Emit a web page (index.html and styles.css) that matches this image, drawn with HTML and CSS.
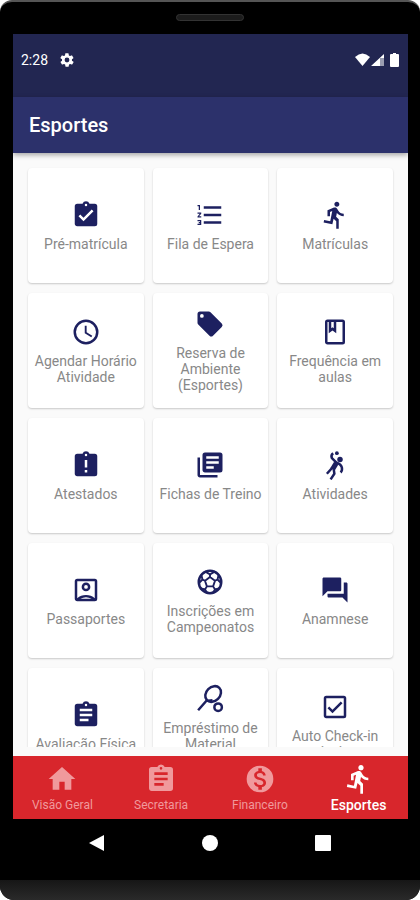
FILE: index.html
```
<!DOCTYPE html>
<html lang="pt-BR">
<head>
<meta charset="utf-8">
<meta name="viewport" content="width=device-width, initial-scale=1">
<title>Esportes</title>
<link rel="stylesheet" href="styles.css">
</head>
<body>
<div class="phone">
<div class="phone-top"><div class="speaker"></div></div>

<div class="screen">
<div class="status-bar">
<span class="time">2:28</span>
<svg class="gear" viewBox="0 0 24 24"><path d="M19.4 13a7 7 0 0 0 0-2l2.1-1.6c.2-.2.2-.4.1-.6l-2-3.500c-.1-.2-.4-.3-.6-.2l-2.500 1a7 7 0 0 0-1.700-1l-.4-2.600a.5.5 0 0 0-.5-.5h-4c-.2 0-.4.200-.5.5l-.4 2.600a7 7 0 0 0-1.700 1l-2.500-1c-.2-.1-.5 0-.6.200l-2 3.500c-.1.200-.1.500.1.600L4.600 11a7 7 0 0 0 0 2l-2.100 1.600c-.2.200-.2.400-.1.600l2 3.500c.1.200.4.300.6.200l2.500-1a7 7 0 0 0 1.700 1l.4 2.600c0 .3.300.5.500.5h4c.3 0 .5-.2.500-.5l.4-2.600a7 7 0 0 0 1.700-1l2.500 1c.2.100.5 0 .6-.2l2-3.500c.1-.2.100-.5-.1-.6zM12 15.600a3.600 3.600 0 1 1 0-7.200 3.600 3.600 0 0 1 0 7.200z"/></svg>
<svg class="signals" viewBox="0 0 45 14"><path d="M0 4Q7.500-3 15 4L7.500 13z"/><path d="M16 13L29 1v4h-4v8z"/><path d="M25 5h4v8h-4z" opacity=".55"/><path d="M38 0h3v1h2q1 0 1 1v11q0 1-1 1h-7q-1 0-1-1V2q0-1 1-1h2z"/></svg>
</div>

<header class="app-bar"><h1>Esportes</h1></header>

<main class="content">
<div class="grid">
<button class="card"><svg viewBox="0 0 24 24"><path d="M19 3h-4.200a3 3 0 0 0-5.600 0H5a2 2 0 0 0-2 2v14c0 1.100.9 2 2 2h14a2 2 0 0 0 2-2V5a2 2 0 0 0-2-2zm-7 0a1 1 0 1 1 0 2 1 1 0 0 1 0-2zm-2 14l-4-4 1.400-1.400 2.600 2.600 6.600-6.600L18 9z"/></svg><span>Pré-matrícula</span></button>
<button class="card"><svg viewBox="0 0 24 24"><path d="M2 17h2v.5H3v1h1v.5H2v1h3v-4H2zm1-9h1V4H2v1h1zm-1 3h1.800L2 13.100v.9h3v-1H3.200L5 10.900V10H2zm5-6v2h14V5zm0 14h14v-2H7zm0-6h14v-2H7z"/></svg><span>Fila de Espera</span></button>
<button class="card"><svg viewBox="0 0 24 24"><path d="M13.490 5.480c1.100 0 2-.9 2-2s-.9-2-2-2-2 .9-2 2 .9 2 2 2zm-3.600 13.900l1-4.400 2.100 2v6h2v-7.500l-2.100-2 .6-3c1.300 1.500 3.300 2.500 5.500 2.500v-2c-1.900 0-3.500-1-4.300-2.400l-1-1.600c-.4-.6-1-1-1.700-1-.3 0-.5.100-.8.100l-5.200 2.200v4.700h2v-3.400l1.800-.7-1.600 8.100-4.900-1-.4 2z"/></svg><span>Matrículas</span></button>

<button class="card"><svg viewBox="0 0 24 24"><path d="M12 2a10 10 0 1 0 0 20 10 10 0 0 0 0-20zm0 18a8 8 0 1 1 0-16 8 8 0 0 1 0 16zm.5-13H11v6l5.200 3.200.8-1.300-4.500-2.700z"/></svg><span>Agendar Horário Atividade</span></button>
<button class="card"><svg viewBox="0 0 24 24"><path d="M21.400 11.600l-9-9A2 2 0 0 0 11 2H4a2 2 0 0 0-2 2v7c0 .6.200 1 .6 1.400l9 9a2 2 0 0 0 2.800 0l7-7a2 2 0 0 0 0-2.800zM5.500 7a1.500 1.500 0 1 1 0-3 1.500 1.500 0 0 1 0 3z"/></svg><span>Reserva de Ambiente (Esportes)</span></button>
<button class="card"><svg viewBox="0 0 24 24"><path d="M18 2H6a2 2 0 0 0-2 2v16c0 1.100.9 2 2 2h12a2 2 0 0 0 2-2V4a2 2 0 0 0-2-2zM9 4h2v5l-1-.8L9 9zm9 16H6V4h1v9l3-2.300 3 2.300V4h5z"/></svg><span>Frequência em aulas</span></button>

<button class="card"><svg viewBox="0 0 24 24"><path d="M19 3h-4.200a3 3 0 0 0-5.600 0H5a2 2 0 0 0-2 2v14c0 1.100.9 2 2 2h14a2 2 0 0 0 2-2V5a2 2 0 0 0-2-2zm-6 15h-2v-2h2zm0-4h-2V8h2zm-1-9a1 1 0 1 1 0-2 1 1 0 0 1 0 2z"/></svg><span>Atestados</span></button>
<button class="card"><svg viewBox="0 0 24 24"><path d="M4 6H2v14c0 1.100.9 2 2 2h14v-2H4zm16-4H8a2 2 0 0 0-2 2v12c0 1.100.9 2 2 2h12a2 2 0 0 0 2-2V4a2 2 0 0 0-2-2zm-1 9H9V9h10zm-4 4H9v-2h6zm4-8H9V5h10z"/></svg><span>Fichas de Treino</span></button>
<button class="card"><svg viewBox="0 0 24 24"><circle cx="16" cy="7.500" r="2.200"/><circle cx="13.500" cy="2.500" r="1.500"/><path d="M10.500 2.500Q8.500 4 9.500 6.500L13 10q4 1.500 4.500 4t-1 4" class="line"/><path d="M13 10.500l-3 5" class="thick"/><path d="M10 14l-4.500 5M11 15.500l.5 3.500-3 4.500" class="line"/></svg><span>Atividades</span></button>

<button class="card"><svg viewBox="0 0 24 24"><path d="M19 3H5a2 2 0 0 0-2 2v14c0 1.100.9 2 2 2h14a2 2 0 0 0 2-2V5a2 2 0 0 0-2-2zm0 15.600c-1.800-1.700-4.300-2.600-7-2.600s-5.200.9-7 2.600V5h14zM12 13a3.500 3.500 0 1 0 0-7 3.500 3.500 0 0 0 0 7zm0-5a1.500 1.500 0 1 1 0 3 1.500 1.500 0 0 1 0-3zM7.500 19a9 9 0 0 1 9 0z"/></svg><span>Passaportes</span></button>
<button class="card"><svg viewBox="0 0 24 24"><circle cx="12" cy="12" r="9" class="line"/><path d="M12 8l4 3-1.500 4.500h-5L8 11zM12 8V6l4-2.500M12 6L8 3.500M16 11l2-1 1-4M18 10l3 3M14.500 15.500L16 18l4-1M16 18l-2 3M9.500 15.500L8 18l-4-1M8 18l2 3M8 11l-2-1-1-4M6 10l-3 3" class="thin"/></svg><span>Inscrições em Campeonatos</span></button>
<button class="card"><svg viewBox="0 0 24 24"><path d="M21 6h-2v9H6v2c0 .6.500 1 1 1h11l4 4V7c0-.5-.4-1-1-1zm-4 6V3c0-.5-.4-1-1-1H3c-.5 0-1 .5-1 1v14l4-4h10c.6 0 1-.4 1-1z"/></svg><span>Anamnese</span></button>

<button class="card"><svg viewBox="0 0 24 24"><path d="M19 3h-4.200a3 3 0 0 0-5.600 0H5a2 2 0 0 0-2 2v14c0 1.100.9 2 2 2h14a2 2 0 0 0 2-2V5a2 2 0 0 0-2-2zm-7 0a1 1 0 1 1 0 2 1 1 0 0 1 0-2zm2 14H7v-2h7zm3-4H7v-2h10zm0-4H7V7h10z"/></svg><span>Avaliação Física</span></button>
<button class="card"><svg viewBox="0 0 24 24"><ellipse cx="14.500" cy="8" rx="7" ry="5.500" transform="rotate(-45 14.500 8)" class="line"/><path d="M9.500 13L2.500 21M9 13.500l5-.5" class="line"/><circle cx="18.500" cy="18.500" r="3" class="line"/></svg><span>Empréstimo de Material (Esportes)</span></button>
<button class="card"><svg viewBox="0 0 24 24"><path d="M19 3H5a2 2 0 0 0-2 2v14c0 1.100.9 2 2 2h14a2 2 0 0 0 2-2V5a2 2 0 0 0-2-2zm0 16H5V5h14zM18 9l-1.400-1.400L10 14.200l-2.600-2.600L6 13l4 4z"/></svg><span>Auto Check-in piscina</span></button>
</div>
</main>

<nav class="tabs">
<a href="#" class="tab"><svg viewBox="0 0 24 24"><path d="M10 20v-6h4v6h5v-8h3L12 3 2 12h3v8z"/></svg><span>Visão Geral</span></a>
<a href="#" class="tab"><svg viewBox="0 0 24 24"><path d="M19 3h-4.200a3 3 0 0 0-5.600 0H5a2 2 0 0 0-2 2v14c0 1.100.9 2 2 2h14a2 2 0 0 0 2-2V5a2 2 0 0 0-2-2zm-7 0a1 1 0 1 1 0 2 1 1 0 0 1 0-2zm2 14H7v-2h7zm3-4H7v-2h10zm0-4H7V7h10z"/></svg><span>Secretaria</span></a>
<a href="#" class="tab"><svg viewBox="0 0 24 24"><path d="M12 2a10 10 0 1 0 0 20 10 10 0 0 0 0-20zm1.410 16.090V20h-2.670v-1.930c-1.710-.36-3.160-1.460-3.270-3.400h1.960c.1 1.050.82 1.870 2.650 1.870 1.960 0 2.400-.98 2.400-1.590 0-.83-.44-1.610-2.670-2.140-2.480-.6-4.180-1.620-4.180-3.670 0-1.720 1.390-2.840 3.110-3.210V4h2.670v1.950c1.860.45 2.790 1.860 2.850 3.390H14.300c-.05-1.110-.64-1.870-2.220-1.870-1.500 0-2.400.68-2.400 1.640 0 .84.65 1.390 2.670 1.910s4.180 1.390 4.180 3.910c-.01 1.830-1.380 2.830-3.120 3.160z"/></svg><span>Financeiro</span></a>
<a href="#" class="tab active"><svg viewBox="0 0 24 24"><path d="M13.490 5.480c1.100 0 2-.9 2-2s-.9-2-2-2-2 .9-2 2 .9 2 2 2zm-3.600 13.900l1-4.400 2.100 2v6h2v-7.500l-2.100-2 .6-3c1.300 1.500 3.300 2.500 5.500 2.500v-2c-1.900 0-3.500-1-4.300-2.400l-1-1.600c-.4-.6-1-1-1.700-1-.3 0-.5.100-.8.100l-5.200 2.200v4.700h2v-3.400l1.800-.7-1.600 8.100-4.900-1-.4 2z"/></svg><span>Esportes</span></a>
</nav>
</div>

<div class="system-nav">
<button aria-label="Voltar"><svg viewBox="0 0 18 18"><path d="M1 9L16 1v16z"/></svg></button>
<button aria-label="Início"><svg viewBox="0 0 18 18"><circle cx="9" cy="9" r="8"/></svg></button>
<button aria-label="Recentes"><svg viewBox="0 0 18 18"><rect x="1" y="1" width="16" height="16" rx="1"/></svg></button>
</div>
<div class="phone-bottom"></div>
</div>
</body>
</html>
```

FILE: styles.css
```
*{
box-sizing:border-box;
}
body{
margin:0;
background:#fff;
font-family:Roboto,"Liberation Sans",sans-serif;
}
h1{
margin:0;
font-size:20px;
line-height:24px;
font-weight:500;
}
button{
font-family:inherit;
border:none;
padding:0;
cursor:pointer;
}
svg{
display:block;
fill:currentColor;
}
.phone{
display:flex;
flex-direction:column;
height:100vh;
background:#000;
border-top:2px solid #555;
border-radius:12px 12px 14px 14px;
overflow:hidden;
}
.phone-top{
flex:none;
height:32px;
padding-top:12px;
}
.speaker{
width:68px;
height:7px;
margin:0 auto;
border:1px solid #333;
border-radius:4px;
background:#1c1c1c;
}
.screen{
flex:1;
min-height:0;
display:flex;
flex-direction:column;
margin:0 12px 0 13px;
background:#fafafa;
}

/* top bars */
.status-bar{
flex:none;
display:flex;
align-items:center;
height:63px;
padding:0 8px 12px;
background:#222651;
color:#fff;
}
.time{
font-size:14px;
line-height:16px;
}
.gear{
width:16px;
height:16px;
margin-left:11px;
}
.signals{
width:45px;
height:14px;
margin-left:auto;
}
.app-bar{
flex:none;
display:flex;
align-items:center;
height:56px;
padding:0 16px;
background:#2c316b;
color:#fff;
box-shadow:0 2px 5px rgba(0,0,0,0.35);
z-index:1;
}

/* cards */
.content{
flex:1;
min-height:0;
margin-bottom:9px;
overflow:hidden;
}
.grid{
display:grid;
grid-template-columns:repeat(3,1fr);
grid-auto-rows:115px;
gap:10px 9px;
padding:15px;
}
.card{
display:flex;
flex-direction:column;
align-items:center;
justify-content:center;
gap:6px;
padding:0 4px;
border-radius:4px;
background:#fff;
box-shadow:0 1px 2px rgba(0,0,0,0.2);
color:#888;
font-size:14px;
line-height:16px;
}
.card svg{
flex:none;
width:30px;
height:30px;
color:#1d2060;
}
.card .line,
.card .thin,
.card .thick{
fill:none;
stroke:currentColor;
stroke-width:2;
}
.card .thin{
stroke-width:1.500;
}
.card .thick{
stroke-width:4;
}

/* bottom tabs */
.tabs{
flex:none;
display:grid;
grid-template-columns:repeat(4,1fr);
height:63px;
background:#d8262c;
}
.tab{
display:flex;
flex-direction:column;
align-items:center;
padding-top:7px;
gap:2px;
color:#f0999c;
font-size:12px;
line-height:16px;
text-decoration:none;
}
.tab svg{
width:32px;
height:32px;
}
.tab.active{
color:#fff;
font-size:14px;
font-weight:500;
}

.system-nav{
flex:none;
display:flex;
justify-content:space-around;
align-items:center;
height:61px;
padding:0 40px 14px;
}
.system-nav button{
background:none;
color:#fff;
}
.system-nav svg{
width:18px;
height:18px;
}
.phone-bottom{
flex:none;
height:20px;
background:linear-gradient(#161616,#2a2a2a);
}
```
